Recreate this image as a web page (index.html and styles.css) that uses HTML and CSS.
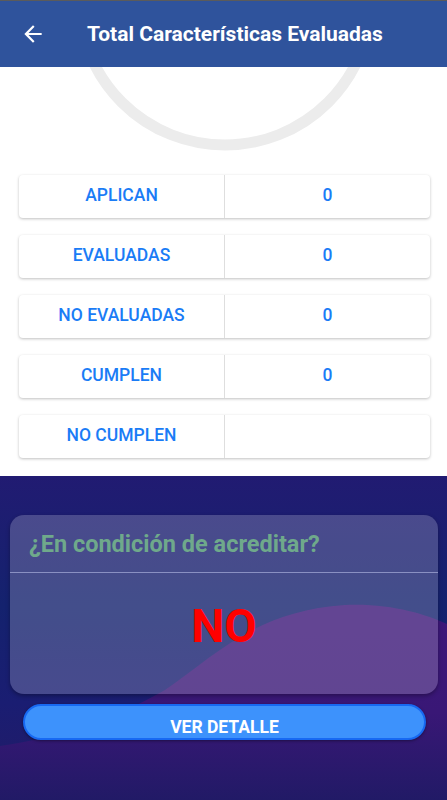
FILE: index.html
```html
<!DOCTYPE html>
<html lang="es">
<head>
    <meta charset="UTF-8">
    <meta name="viewport" content="width=device-width, initial-scale=1.0">
    <title>Total Características Evaluadas</title>
    <link rel="stylesheet" href="styles.css">
</head>
<body>
    <header class="topbar">
        <svg class="back" width="26" height="26" viewBox="0 0 24 24"><path d="M20 11H7.83l5.59-5.59L12 4l-8 8 8 8 1.41-1.41L7.83 13H20v-2z" fill="#fff"/></svg>
        <h1>Total Características Evaluadas</h1>
    </header>

    <!-- grafico circular (parte inferior visible) -->
    <div class="chart">
        <svg width="447" height="86" viewBox="0 0 447 86"><circle cx="225" cy="-68" r="146" fill="none" stroke="#ececec" stroke-width="11"/></svg>
    </div>

    <!-- tabla de totales -->
    <div class="rows">
        <div class="row"><span class="label">APLICAN</span><span class="value">0</span></div>
        <div class="row"><span class="label">EVALUADAS</span><span class="value">0</span></div>
        <div class="row"><span class="label">NO EVALUADAS</span><span class="value">0</span></div>
        <div class="row"><span class="label">CUMPLEN</span><span class="value">0</span></div>
        <div class="row"><span class="label">NO CUMPLEN</span><span class="value"></span></div>
    </div>

    <!-- resultado -->
    <section class="result">
        <svg class="wave" width="447" height="325" viewBox="0 0 447 325">
            <defs>
                <linearGradient id="waveFill" x1="0" y1="0" x2="0" y2="1">
                    <stop offset="0" stop-color="#3d1779"/>
                    <stop offset="0.55" stop-color="#391776"/>
                    <stop offset="1" stop-color="#211a66"/>
                </linearGradient>
            </defs>
            <path d="M0 270 C60 262 120 240 165 214 C215 180 255 135 345 129 C390 127 425 138 447 148 L447 325 L0 325 Z" fill="url(#waveFill)"/>
        </svg>
        <div class="panel">
            <h2>¿En condición de acreditar?</h2>
            <p class="answer">NO</p>
        </div>
        <button class="detail">VER DETALLE</button>
    </section>
</body>
</html>
```

FILE: styles.css
```css
body {
    margin: 0;
    font-family: Roboto, "Liberation Sans", sans-serif;
    background: #fff;
    border-top: 1px solid #5b5b5b;
    overflow: hidden;
    height: 799px;
    display: flex;
    flex-direction: column;
}
.topbar {
    height: 66px;
    background: #2f539c;
    display: flex;
    align-items: center;
    padding-left: 20px;
    position: relative;
    z-index: 1;
}
.topbar h1 {
    margin: 0 0 0 41px;
    color: #fff;
    font-size: 21px;
    font-weight: 700;
}
.back { display: block; }
.chart { height: 86px; }
.chart svg { display: block; }

.rows {
    padding: 22px 17px 18px 19px;
    display: flex;
    flex-direction: column;
    gap: 17px;
}
.row {
    height: 43px;
    background: #fff;
    border-radius: 4px;
    box-shadow: 0 1px 3px rgba(0, 0, 0, 0.25);
    display: flex;
    color: #1a7cf6;
    font-size: 17.5px;
    font-weight: 500;
}
.row span {
    flex: 1;
    display: flex;
    align-items: center;
    justify-content: center;
    padding-bottom: 3px;
}
.row .label { border-right: 1px solid #dedede; }

.result {
    flex: 1;
    position: relative;
    background: linear-gradient(to bottom, #211b72 0%, #14226e 40%, #1a1d72 70%, #231b66 100%);
    padding: 39px 9px 0 10px;
    display: flex;
    flex-direction: column;
    align-items: stretch;
}
.wave { position: absolute; left: 0; top: 0; }
.panel {
    position: relative;
    height: 179px;
    border-radius: 14px;
    background: rgba(255, 255, 255, 0.2);
    box-shadow: 0 2px 4px rgba(0, 0, 0, 0.3);
    display: flex;
    flex-direction: column;
}
.panel h2 {
    margin: 0;
    padding: 0 19px;
    height: 57px;
    line-height: 58px;
    color: #6fa98b;
    font-size: 23.5px;
    font-weight: 700;
    border-bottom: 1px solid #8a90c2;
}
.answer {
    margin: 0;
    flex: 1;
    display: flex;
    align-items: center;
    justify-content: center;
    padding-bottom: 16px;
    color: #ff0000;
    font-size: 47px;
    font-weight: 700;
}
.detail {
    position: relative;
    margin: 10px 12px 0 13px;
    height: 36px;
    border-radius: 18px;
    border: 2px solid #1769f2;
    background: #3d92fc;
    color: #fff;
    font-family: inherit;
    font-size: 17.5px;
    font-weight: 700;
    padding-top: 10px;
    box-shadow: 0 1px 3px rgba(0, 0, 0, 0.4);
}
```
